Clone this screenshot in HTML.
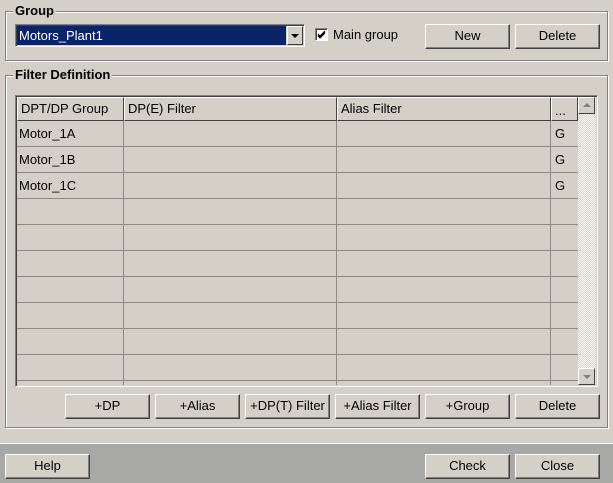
<!DOCTYPE html>
<html><head><style>
*{margin:0;padding:0;box-sizing:border-box}
body{width:613px;height:483px;background:#d4d0c8;position:relative;overflow:hidden;font-family:"Liberation Sans",Arial,sans-serif;font-size:13px;color:#000}
.a{position:absolute}
.frame{position:absolute;border:1px solid #808080;box-shadow:1px 1px 0 #fff inset,1px 1px 0 #fff}
.leg{position:absolute;background:#d4d0c8;font-weight:bold;padding:0 2px;font-size:13px}
.btn{position:absolute;height:25px;width:85px;background:#d4d0c8;border:1px solid;border-color:#fff #404040 #404040 #fff;box-shadow:inset -1px -1px 0 #808080;text-align:center;line-height:22px;font-size:13px}
.hl{position:absolute;height:1px;background:#8c8c88}
.vl{position:absolute;width:1px;background:#8c8c88}
.cell{position:absolute;font-size:13px}
</style></head><body>
<div class="frame" style="left:5px;top:11px;width:603px;height:50px"></div>
<div class="leg" style="left:13px;top:3px">Group</div>
<div class="a" style="left:15px;top:24px;width:290px;height:23px;border:1px solid;border-color:#808080 #fff #fff #808080;box-shadow:inset 1px 1px 0 #404040"></div>
<div class="a" style="left:17px;top:26px;width:269px;height:19px;background:#0a246a;color:#fff;padding-left:2px;line-height:19px;font-size:13px">Motors_Plant1</div>
<div class="a" style="left:287px;top:26px;width:16px;height:19px;background:#d4d0c8;border:1px solid;border-color:#fff #404040 #404040 #fff"><div class="a" style="left:3px;top:7px;width:0;height:0;border-left:4px solid transparent;border-right:4px solid transparent;border-top:4px solid #000"></div></div>
<div class="a" style="left:315px;top:28px;width:13px;height:13px;background:#fff;border:1px solid;border-color:#808080 #fff #fff #808080;box-shadow:inset 1px 1px 0 #404040"><svg width="11" height="11" style="position:absolute;left:0;top:0"><path d="M2 5 L4 7 L9 2 M2 6 L4 8 L9 3 M2 7 L4 9 L9 4" stroke="#000" fill="none"/></svg></div>
<div class="a" style="left:333px;top:27px">Main group</div>
<div class="btn" style="left:425px;top:24px">New</div>
<div class="btn" style="left:515px;top:24px">Delete</div>

<div class="frame" style="left:5px;top:75px;width:603px;height:353px"></div>
<div class="leg" style="left:13px;top:67px">Filter Definition</div>

<div class="a" style="left:15px;top:95px;width:583px;height:292px;border:1px solid;border-color:#808080 #fff #fff #808080;box-shadow:inset 1px 1px 0 #404040"></div>
<div class="a" style="left:17px;top:97px;width:561px;height:288px;background:#d4d0c8"></div>
<div class="a" style="left:17px;top:97px;width:107px;height:24px;border:1px solid;border-color:#fff #404040 #404040 #fff"></div>
<div class="a" style="left:124px;top:97px;width:213px;height:24px;border:1px solid;border-color:#fff #404040 #404040 #fff"></div>
<div class="a" style="left:337px;top:97px;width:214px;height:24px;border:1px solid;border-color:#fff #404040 #404040 #fff"></div>
<div class="a" style="left:551px;top:97px;width:27px;height:24px;border:1px solid;border-color:#fff #404040 #404040 #fff"></div>
<div class="cell" style="left:21px;top:101px">DPT/DP Group</div>
<div class="cell" style="left:128px;top:101px">DP(E) Filter</div>
<div class="cell" style="left:341px;top:101px">Alias Filter</div>
<div class="cell" style="left:555px;top:103px">...</div>
<div class="vl" style="left:123px;top:121px;height:264px"></div>
<div class="vl" style="left:336px;top:121px;height:264px"></div>
<div class="vl" style="left:550px;top:121px;height:264px"></div>
<div class="hl" style="left:17px;top:146px;width:561px"></div>
<div class="hl" style="left:17px;top:172px;width:561px"></div>
<div class="hl" style="left:17px;top:198px;width:561px"></div>
<div class="hl" style="left:17px;top:224px;width:561px"></div>
<div class="hl" style="left:17px;top:250px;width:561px"></div>
<div class="hl" style="left:17px;top:276px;width:561px"></div>
<div class="hl" style="left:17px;top:302px;width:561px"></div>
<div class="hl" style="left:17px;top:328px;width:561px"></div>
<div class="hl" style="left:17px;top:354px;width:561px"></div>
<div class="hl" style="left:17px;top:380px;width:561px"></div>
<div class="cell" style="left:19px;top:126px">Motor_1A</div>
<div class="cell" style="left:19px;top:152px">Motor_1B</div>
<div class="cell" style="left:19px;top:178px">Motor_1C</div>
<div class="cell" style="left:555px;top:126px">G</div>
<div class="cell" style="left:555px;top:152px">G</div>
<div class="cell" style="left:555px;top:178px">G</div>
<div class="a" style="left:578px;top:97px;width:18px;height:288px;background:repeating-conic-gradient(#fff 0 25%,#d4d0c8 0 50%) 0 0/2px 2px"></div>
<div class="a" style="left:578px;top:97px;width:17px;height:17px;background:#d4d0c8;border:1px solid;border-color:#fff #404040 #404040 #fff"><div class="a" style="left:4px;top:5px;border-left:4px solid transparent;border-right:4px solid transparent;border-bottom:4px solid #808080"></div></div>
<div class="a" style="left:578px;top:368px;width:17px;height:17px;background:#d4d0c8;border:1px solid;border-color:#fff #404040 #404040 #fff"><div class="a" style="left:4px;top:6px;border-left:4px solid transparent;border-right:4px solid transparent;border-top:4px solid #808080"></div></div>

<div class="btn" style="left:65px;top:394px">+DP</div>
<div class="btn" style="left:155px;top:394px">+Alias</div>
<div class="btn" style="left:245px;top:394px">+DP(T) Filter</div>
<div class="btn" style="left:335px;top:394px">+Alias Filter</div>
<div class="btn" style="left:425px;top:394px">+Group</div>
<div class="btn" style="left:515px;top:394px">Delete</div>

<div class="a" style="left:0;top:443px;width:613px;height:40px;background:#a8a9a6;border-top:1px solid #fff"></div>
<div class="btn" style="left:5px;top:454px">Help</div>
<div class="btn" style="left:425px;top:454px">Check</div>
<div class="btn" style="left:515px;top:454px">Close</div>
</body></html>
